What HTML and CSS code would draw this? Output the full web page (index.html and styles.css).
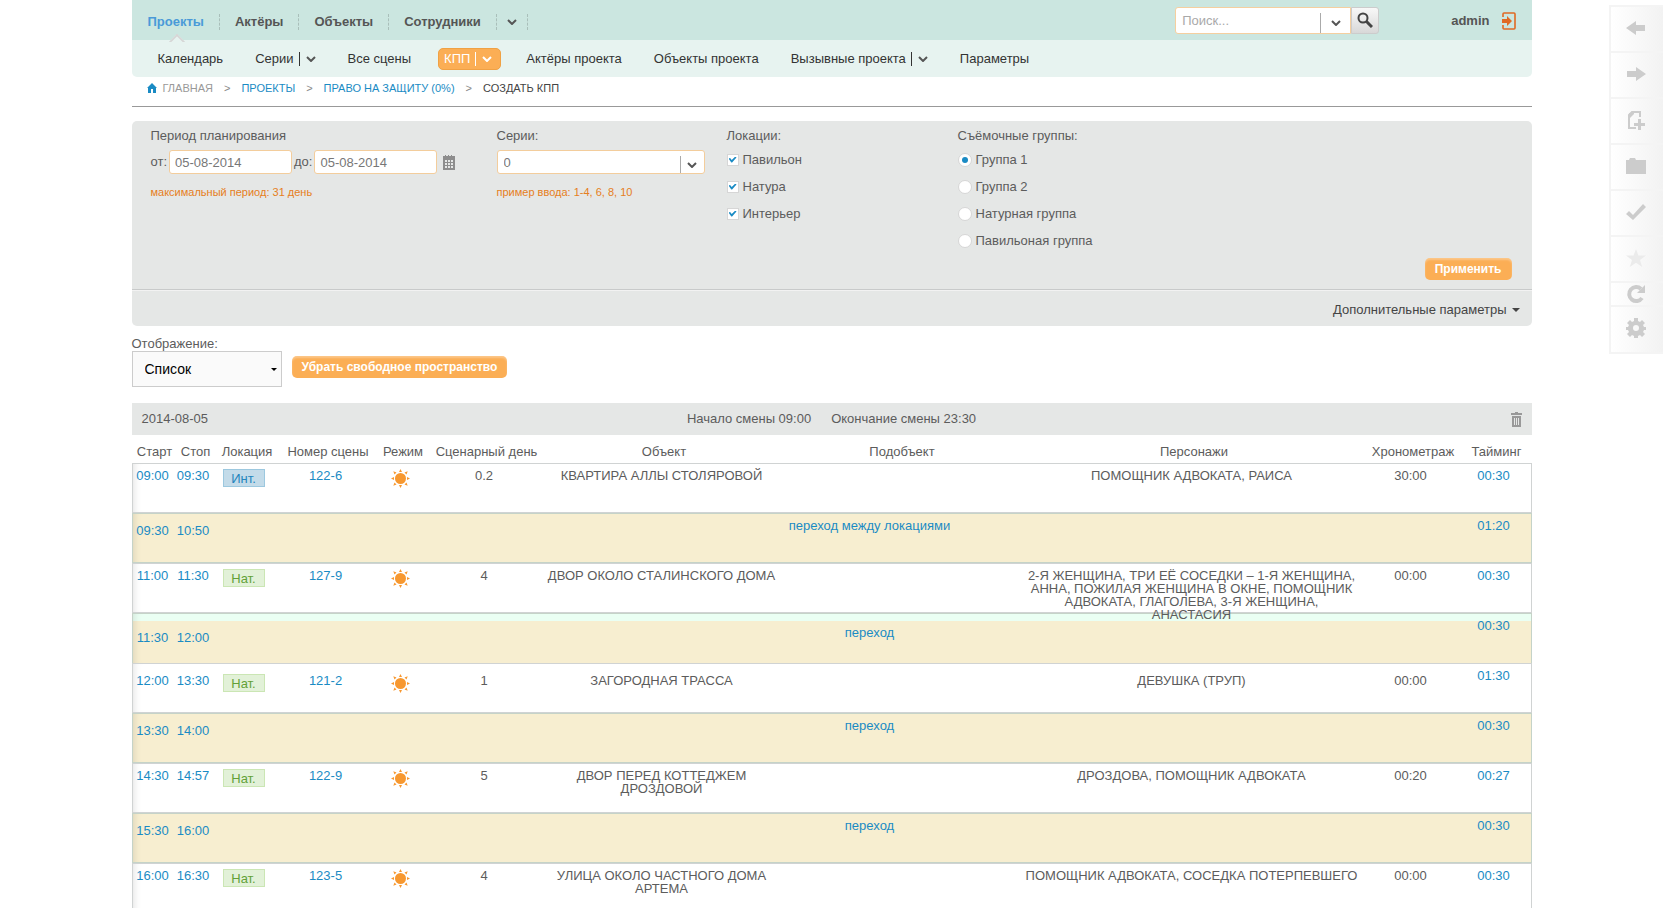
FILE: index.html
```html
<!DOCTYPE html>
<html lang="ru">
<head>
  <meta charset="UTF-8">
  <meta name="viewport" content="width=device-width, initial-scale=1.0">
  <title>Создать КПП</title>
  <link rel="stylesheet" href="styles.css">
</head>
<body>
  <!-- Shared icons -->
  <svg class="sprite" aria-hidden="true">
    <symbol id="chevron" viewBox="0 0 10 6"><path d="M1 1l4 4 4-4" fill="none" stroke="currentColor" stroke-width="2"/></symbol>
    <symbol id="sun" viewBox="0 0 19 19">
      <circle cx="9.5" cy="9.5" r="5.5"/>
      <path d="M8 3h3L9.500 0zM8 16h3l-1.500 3zM3 8v3L0 9.500zM16 8v3l3-1.500zM2.300 2.300l3.200 1.200-2 2zM16.700 2.300l-3.200 1.200 2 2zM2.300 16.700l3.200-1.200-2-2zM16.700 16.700l-3.200-1.200 2-2z"/>
    </symbol>
  </svg>

  <div class="page">
    <header class="header">
      <div class="topbar">
        <nav class="main-nav">
          <a class="active" href="#">Проекты</a>
          <a href="#">Актёры</a>
          <a href="#">Объекты</a>
          <a href="#">Сотрудники</a>
          <button class="more" type="button" aria-label="Ещё"><svg class="chevron"><use href="#chevron"/></svg></button>
        </nav>
        <form class="search">
          <div class="search-box">
            <input type="text" placeholder="Поиск..." aria-label="Поиск">
            <button class="drop" type="button" aria-label="Где искать"><svg class="chevron"><use href="#chevron"/></svg></button>
          </div>
          <button class="search-btn" type="submit" aria-label="Найти">
            <svg width="16" height="16" viewBox="0 0 16 16"><circle cx="6" cy="6" r="4.500" fill="none" stroke="#444" stroke-width="2"/><path d="M9 9l6 6" stroke="#444" stroke-width="3"/></svg>
          </button>
        </form>
        <div class="user">
          <a href="#">admin</a>
          <a class="logout" href="#" aria-label="Выход">
            <svg width="14" height="18" viewBox="0 0 14 18"><path d="M1 5V2q0-1 1-1h10q1 0 1 1v14q0 1-1 1H2q-1 0-1-1v-3" fill="none" stroke="#e06a24" stroke-width="1.600"/><path d="M0 7h5V4l5 5-5 5v-3H0z" fill="#e06a24"/></svg>
          </a>
        </div>
      </div>
      <nav class="sub-nav">
        <a href="#">Календарь</a>
        <a class="has-menu" href="#">Серии<i></i><svg class="chevron"><use href="#chevron"/></svg></a>
        <a href="#">Все сцены</a>
        <a class="has-menu current" href="#">КПП<i></i><svg class="chevron"><use href="#chevron"/></svg></a>
        <a href="#">Актёры проекта</a>
        <a href="#">Объекты проекта</a>
        <a class="has-menu" href="#">Вызывные проекта<i></i><svg class="chevron"><use href="#chevron"/></svg></a>
        <a href="#">Параметры</a>
      </nav>
    </header>

    <div class="breadcrumbs">
      <a class="home" href="#"><svg width="10" height="10" viewBox="0 0 10 10"><path d="M5 0l5 5H9v5H6V6H4v4H1V5H0z" fill="#1a8bc4"/></svg>ГЛАВНАЯ</a>
      <span>&gt;</span>
      <a href="#">ПРОЕКТЫ</a>
      <span>&gt;</span>
      <a href="#">ПРАВО НА ЗАЩИТУ (0%)</a>
      <span>&gt;</span>
      <b>СОЗДАТЬ КПП</b>
    </div>

    <form class="filter">
      <div class="filter-cols">
        <div class="filter-col">
          <div class="filter-title">Период планирования</div>
          <div class="period">
            <label for="from">от:</label>
            <input class="field" id="from" type="text" value="05-08-2014">
            <label for="to">до:</label>
            <input class="field" id="to" type="text" value="05-08-2014">
            <button class="calendar" type="button" aria-label="Календарь">
              <svg width="12" height="15" viewBox="0 0 12 15"><path d="M0 1h2V0h1v1h2V0h1v1h2V0h1v1h3v14H0z" fill="#8d8d8d"/><path d="M2 5h2v2H2zM5 5h2v2H5zM8 5h2v2H8zM2 8h2v2H2zM5 8h2v2H5zM8 8h2v2H8zM2 11h2v2H2zM5 11h2v2H5zM8 11h2v2H8z" fill="#e5e7e6"/></svg>
            </button>
          </div>
          <div class="hint">максимальный период: 31 день</div>
        </div>
        <div class="filter-col">
          <label class="filter-title" for="series">Серии:</label>
          <div class="field combo">
            <input id="series" type="text" value="0">
            <button class="drop" type="button" aria-label="Выбрать серии"><svg class="chevron"><use href="#chevron"/></svg></button>
          </div>
          <div class="hint">пример ввода: 1-4, 6, 8, 10</div>
        </div>
        <div class="filter-col">
          <div class="filter-title">Локации:</div>
          <label class="option"><input type="checkbox" checked>Павильон</label>
          <label class="option"><input type="checkbox" checked>Натура</label>
          <label class="option"><input type="checkbox" checked>Интерьер</label>
        </div>
        <div class="filter-col">
          <div class="filter-title">Съёмочные группы:</div>
          <label class="option"><input type="radio" name="group" checked>Группа 1</label>
          <label class="option"><input type="radio" name="group">Группа 2</label>
          <label class="option"><input type="radio" name="group">Натурная группа</label>
          <label class="option"><input type="radio" name="group">Павильоная группа</label>
        </div>
      </div>
      <div class="filter-submit"><button class="btn" type="submit">Применить</button></div>
      <div class="filter-more"><a href="#">Дополнительные параметры</a></div>
    </form>

    <label class="view-label" for="view">Отображение:</label>
    <div class="view">
      <div class="select">
        <select id="view">
          <option>Список</option>
        </select>
      </div>
      <button class="btn" type="button">Убрать свободное пространство</button>
    </div>

    <div class="day">
      <span class="date">2014-08-05</span>
      <span class="shift"><span>Начало смены 09:00</span><span>Окончание смены 23:30</span></span>
      <button class="trash" type="button" aria-label="Удалить">
        <svg width="11" height="15" viewBox="0 0 11 15"><path d="M0 1h4V0h3v1h4v2H0zM1 4h9v11H1z" fill="#999"/><path d="M3.500 6v7M5.500 6v7M7.500 6v7" stroke="#e5e7e6"/></svg>
      </button>
    </div>

    <table class="schedule">
      <colgroup>
        <col class="c-time"><col class="c-time"><col class="c-loc"><col class="c-num"><col class="c-mode"><col class="c-day">
        <col class="c-obj"><col class="c-obj"><col><col class="c-chrono"><col class="c-timing">
      </colgroup>
      <thead>
        <tr>
          <th>Старт</th><th>Стоп</th><th>Локация</th><th>Номер сцены</th><th>Режим</th><th>Сценарный день</th>
          <th>Объект</th><th>Подобъект</th><th>Персонажи</th><th>Хронометраж</th><th>Тайминг</th>
        </tr>
      </thead>
      <tbody>
        <tr>
          <td><a href="#">09:00</a></td><td><a href="#">09:30</a></td>
          <td><span class="tag int">Инт.</span></td>
          <td><a href="#">122-6</a></td>
          <td><svg class="sun"><use href="#sun"/></svg></td>
          <td>0.2</td>
          <td>КВАРТИРА АЛЛЫ СТОЛЯРОВОЙ</td><td></td>
          <td>ПОМОЩНИК АДВОКАТА, РАИСА</td>
          <td>30:00</td><td><a href="#">00:30</a></td>
        </tr>
        <tr class="move">
          <td><a href="#">09:30</a></td><td><a href="#">10:50</a></td>
          <td></td><td class="move-name" colspan="7"><a href="#">переход между локациями</a></td>
          <td><a href="#">01:20</a></td>
        </tr>
        <tr>
          <td><a href="#">11:00</a></td><td><a href="#">11:30</a></td>
          <td><span class="tag nat">Нат.</span></td>
          <td><a href="#">127-9</a></td>
          <td><svg class="sun"><use href="#sun"/></svg></td>
          <td>4</td>
          <td>ДВОР ОКОЛО СТАЛИНСКОГО ДОМА</td><td></td>
          <td><div class="cast">2-Я ЖЕНЩИНА, ТРИ ЕЁ СОСЕДКИ – 1-Я ЖЕНЩИНА, АННА, ПОЖИЛАЯ ЖЕНЩИНА В ОКНЕ, ПОМОЩНИК АДВОКАТА, ГЛАГОЛЕВА, 3-Я ЖЕНЩИНА, АНАСТАСИЯ</div></td>
          <td>00:00</td><td><a href="#">00:30</a></td>
        </tr>
        <tr class="move shifted">
          <td><a href="#">11:30</a></td><td><a href="#">12:00</a></td>
          <td></td><td class="move-name" colspan="7"><a href="#">переход</a></td>
          <td><a href="#">00:30</a></td>
        </tr>
        <tr class="after-shift">
          <td><a href="#">12:00</a></td><td><a href="#">13:30</a></td>
          <td><span class="tag nat">Нат.</span></td>
          <td><a href="#">121-2</a></td>
          <td><svg class="sun"><use href="#sun"/></svg></td>
          <td>1</td>
          <td>ЗАГОРОДНАЯ ТРАССА</td><td></td>
          <td>ДЕВУШКА (ТРУП)</td>
          <td>00:00</td><td><a href="#">01:30</a></td>
        </tr>
        <tr class="move">
          <td><a href="#">13:30</a></td><td><a href="#">14:00</a></td>
          <td></td><td class="move-name" colspan="7"><a href="#">переход</a></td>
          <td><a href="#">00:30</a></td>
        </tr>
        <tr>
          <td><a href="#">14:30</a></td><td><a href="#">14:57</a></td>
          <td><span class="tag nat">Нат.</span></td>
          <td><a href="#">122-9</a></td>
          <td><svg class="sun"><use href="#sun"/></svg></td>
          <td>5</td>
          <td>ДВОР ПЕРЕД КОТТЕДЖЕМ ДРОЗДОВОЙ</td><td></td>
          <td>ДРОЗДОВА, ПОМОЩНИК АДВОКАТА</td>
          <td>00:20</td><td><a href="#">00:27</a></td>
        </tr>
        <tr class="move">
          <td><a href="#">15:30</a></td><td><a href="#">16:00</a></td>
          <td></td><td class="move-name" colspan="7"><a href="#">переход</a></td>
          <td><a href="#">00:30</a></td>
        </tr>
        <tr>
          <td><a href="#">16:00</a></td><td><a href="#">16:30</a></td>
          <td><span class="tag nat">Нат.</span></td>
          <td><a href="#">123-5</a></td>
          <td><svg class="sun"><use href="#sun"/></svg></td>
          <td>4</td>
          <td>УЛИЦА ОКОЛО ЧАСТНОГО ДОМА АРТЕМА</td><td></td>
          <td>ПОМОЩНИК АДВОКАТА, СОСЕДКА ПОТЕРПЕВШЕГО</td>
          <td>00:00</td><td><a href="#">00:30</a></td>
        </tr>
      </tbody>
    </table>
  </div>

  <!-- Floating tools on the right edge -->
  <div class="tools">
    <button type="button" aria-label="Назад"><svg viewBox="0 0 20 20"><path d="M0 10l10-7v4h9v6h-9v4z"/></svg></button>
    <button type="button" aria-label="Вперёд"><svg viewBox="0 0 20 20"><path d="M20 10l-10-7v4H1v6h9v4z"/></svg></button>
    <button type="button" aria-label="Создать"><svg viewBox="0 0 20 20"><path d="M14 7V2H6L3 5v13h7" fill="none" stroke="#ccc" stroke-width="2"/><path d="M3 3h5v1L4 8H3zM12 9h3v4h4v3h-4v4h-3v-4H8v-3h4z"/></svg></button>
    <button type="button" aria-label="Папка"><svg viewBox="0 0 20 20"><path d="M0 4h3l1-2h5l1 2h10v14H0z"/></svg></button>
    <button type="button" aria-label="Готово"><svg viewBox="0 0 20 20"><path d="M0 12l3-3 4 4L17 2l3 3L7 18z"/></svg></button>
    <button class="disabled" type="button" aria-label="Избранное"><svg viewBox="0 0 20 20"><path d="M10 1l2.400 6.600H20l-6 4.300L16.200 19 10 14.800 3.800 19 6 11.900 0 7.600h7.600z"/></svg></button>
    <button class="short" type="button" aria-label="Обновить"><svg viewBox="0 0 20 20"><path d="M16 14a7 7 0 1 1-1-9" fill="none" stroke="#ccc" stroke-width="4"/><path d="M19 1v8h-8z"/></svg></button>
    <button type="button" aria-label="Настройки"><svg viewBox="0 0 20 20"><path fill-rule="evenodd" d="M8 0h4v3l2 1 2-2 3 3-2 2 1 2h2v3h-2l-1 2 2 2-3 3-2-2-2 1v2H8v-2l-2-1-2 2-3-3 2-2-1-2H0V9h2l1-2-2-2 3-3 2 2 2-1zM10 7a3 3 0 1 0 0 6 3 3 0 0 0 0-6z"/></svg></button>
  </div>
</body>
</html>
```

FILE: styles.css
```css
*, *::before, *::after {
  box-sizing: border-box;
}

body {
  margin: 0;
  font-family: "Liberation Sans", Arial, sans-serif;
  font-size: 13px;
  line-height: 16px;
  color: #5c5c5c;
  background: #fff;
  height: 100vh;
  overflow: hidden;
}

a {
  color: #1a8bc4;
  text-decoration: none;
}

button, input, select {
  font: inherit;
  color: inherit;
  margin: 0;
}

button {
  padding: 0;
  border: none;
  background: none;
  cursor: pointer;
}

svg {
  display: block;
  flex: none;
}

.sprite {
  position: absolute;
  width: 0;
  height: 0;
}

.chevron {
  width: 10px;
  height: 6px;
}

.page {
  max-width: 1400px;
  margin: 0 auto;
}

/* Header */
.header {
  background: #e7f3f0;
  border-radius: 0 0 5px 5px;
}

.topbar {
  display: flex;
  align-items: center;
  height: 40px;
  padding-right: 16px;
  background: #cbe6e0;
}

.main-nav {
  display: flex;
  align-items: center;
  height: 40px;
  padding: 3px 0 0 1px;
  font-weight: bold;
}

.main-nav a, .main-nav .more {
  display: flex;
  align-items: center;
  height: 16px;
  padding: 0 15px;
  color: #555;
  border-right: 1px dashed #a9bfba;
}

.main-nav .more {
  padding: 0 10px;
}

.main-nav .active {
  position: relative;
  color: #4a9ad8;
}

/* Pointer under the active section */
.main-nav .active::after {
  content: "";
  position: absolute;
  top: 22px;
  left: 38px;
  width: 12px;
  height: 12px;
  border: solid #d6d6d6;
  border-width: 2px 0 0 2px;
  background: #e7f3f0;
  transform: rotate(45deg);
  clip-path: polygon(0 0, 100% 0, 0 100%);
}

.search {
  display: flex;
  height: 27px;
  margin-left: auto;
}

.search-box {
  display: flex;
  width: 176px;
  background: #fff;
  border: 1px solid #f5cf9f;
  border-radius: 3px 0 0 3px;
}

.search-box input, .combo input {
  flex: 1;
  min-width: 0;
  padding: 2px 6px 0;
  border: none;
  background: none;
  outline: none;
}

::placeholder {
  color: #a9a9a9;
  opacity: 1;
}

.drop {
  display: flex;
  align-items: center;
  justify-content: center;
  width: 30px;
  margin-top: 5px;
  border-left: 1px solid #aaa;
  color: #555;
}

.search-btn {
  display: flex;
  align-items: center;
  justify-content: center;
  width: 28px;
  border: 1px solid #ccc;
  border-radius: 0 3px 3px 0;
  background: linear-gradient(#f8f8f8, #d8d8d8);
}

.user {
  display: flex;
  align-items: center;
  gap: 12px;
  margin-left: 72px;
  padding-top: 2px;
  font-weight: bold;
}

.user a {
  color: #555;
}

.sub-nav {
  display: flex;
  align-items: center;
  height: 37px;
  padding-left: 10px;
}

.sub-nav a {
  padding: 0 16px;
  color: #333;
}

.sub-nav .has-menu {
  display: flex;
  align-items: center;
}

.sub-nav i {
  width: 1px;
  height: 14px;
  margin: 0 6px 0 5px;
  background: currentColor;
}

.sub-nav .chevron {
  color: #555;
}

.sub-nav .current {
  height: 22px;
  padding: 0 8px 0 5px;
  margin: 0 9px 0 11px;
  color: #fff;
  background: #fbae55;
  border: 1px solid #f0a144;
  border-radius: 5px;
}

.sub-nav .current .chevron {
  color: #fff;
}

.breadcrumbs {
  display: flex;
  gap: 11px;
  height: 30px;
  padding: 3px 15px 0;
  border-bottom: 1px solid #999;
  font-size: 11px;
  color: #888;
}

.breadcrumbs .home {
  display: flex;
  align-items: center;
  gap: 6px;
  height: 16px;
  color: #999;
}

.breadcrumbs b {
  font-weight: normal;
  color: #444;
}

/* Filter */
.filter {
  margin-top: 14px;
  background: #e5e7e6;
  border-radius: 5px;
}

.filter-cols {
  display: grid;
  grid-template-columns: 346px 230px 231px 1fr;
  padding: 7px 19px 0;
}

.filter-title {
  display: block;
  height: 22px;
}

.period {
  display: flex;
  align-items: center;
  gap: 2px;
}

.field {
  width: 123px;
  height: 24px;
  padding: 1px 5px 0;
  border: 1px solid #f3cd9c;
  border-radius: 3px;
  background: #fff;
  color: #777;
  outline: none;
}

.calendar {
  margin-left: 4px;
}

.combo {
  display: flex;
  width: 208px;
  padding: 0;
}

.combo .drop {
  width: 24px;
}

.hint {
  margin-top: 10px;
  font-size: 11px;
  color: #e67e22;
}

.option {
  display: flex;
  align-items: center;
  gap: 4px;
  height: 27px;
}

.filter-title + .option {
  margin-top: -4px;
}

.option input {
  appearance: none;
  width: 12px;
  height: 12px;
  border: 1px solid #d6d6d6;
  background: #fff;
  display: grid;
  place-items: center;
}

.option input[type="radio"] {
  width: 14px;
  height: 14px;
  border-radius: 50%;
}

.option input[type="checkbox"]:checked::after {
  content: "";
  width: 8px;
  height: 6px;
  background: #1a8bc4;
  clip-path: polygon(0 35%, 20% 25%, 40% 60%, 85% 0, 100% 15%, 45% 100%, 35% 100%);
}

.option input[type="radio"]:checked::after {
  content: "";
  width: 6px;
  height: 6px;
  border-radius: 50%;
  background: #1a8bc4;
}

.btn {
  height: 22px;
  padding: 0 10px;
  border-radius: 5px;
  background: #fbae55;
  box-shadow: inset 0 2px 2px rgba(255, 255, 255, 0.3);
  color: #fff;
  font-size: 12px;
  font-weight: bold;
}

.filter-submit {
  display: flex;
  justify-content: flex-end;
  padding: 4px 20px 9px;
  border-bottom: 1px solid #c8caca;
}

.filter-more {
  display: flex;
  justify-content: flex-end;
  height: 36px;
  padding: 11px 12px 0;
  border-top: 1px solid #f2f2f2;
}

.filter-more a {
  display: flex;
  align-items: center;
  gap: 5px;
  height: 16px;
  color: #444;
}

.filter-more a::after {
  content: "";
  border: 4px solid transparent;
  border-top-color: #444;
  border-bottom: none;
}

/* View switch */
.view-label {
  display: block;
  margin-top: 10px;
  height: 15px;
}

.view {
  display: flex;
  gap: 10px;
}

.view .btn {
  margin-top: 5px;
}

.select {
  position: relative;
  width: 150px;
}

.select select {
  appearance: none;
  width: 100%;
  height: 36px;
  padding: 0 12px;
  border: 1px solid #ccc;
  border-radius: 0;
  background: #fafafa;
  color: #000;
  font-size: 14px;
}

.select::after {
  content: "";
  position: absolute;
  right: 5px;
  top: 17px;
  border: 3px solid transparent;
  border-top-color: #000;
  border-bottom: none;
}

/* Shooting day */
.day {
  display: grid;
  grid-template-columns: 1fr auto 1fr;
  align-items: center;
  height: 32px;
  margin-top: 16px;
  padding: 0 10px;
  background: #e5e7e6;
}

.shift {
  display: flex;
  gap: 20px;
}

.trash {
  justify-self: end;
}

.schedule {
  width: 100%;
  table-layout: fixed;
  border-collapse: separate;
  border-spacing: 0;
  line-height: 13px;
  text-align: center;
}

.c-time {
  width: 41px;
}

.c-loc {
  width: 62px;
}

.c-num {
  width: 100px;
}

.c-mode {
  width: 50px;
}

.c-day {
  width: 117px;
}

.c-obj {
  width: 17%;
}

.c-chrono {
  width: 92px;
}

.c-timing {
  width: 75px;
}

.schedule th {
  height: 28px;
  padding: 5px 0 0 5px;
  font-weight: normal;
  white-space: nowrap;
}

.schedule td {
  height: 50px;
  padding: 5px 5px 0;
  border: solid #d0d3d3;
  border-width: 1px 0;
  vertical-align: top;
}

.schedule td:first-child {
  border-left-width: 1px;
  box-shadow: inset 8px 0 8px -8px rgba(0, 0, 0, 0.15);
}

.schedule td:last-child {
  border-right-width: 1px;
}

.schedule .move td {
  border-color: #c5d3c8;
}

.schedule td:nth-child(-n+2) {
  padding-left: 0;
  padding-right: 0;
}

.move {
  background: #f7eed0;
}

.move td:nth-child(-n+2) {
  padding-top: 10px;
}

.schedule .move-name {
  padding-left: 12px;
}

.shifted {
  background: linear-gradient(#eafff3 8px, #f7eed0 8px);
}

.schedule .shifted td {
  border-bottom: none;
}

.schedule .shifted td:nth-child(-n+2) {
  padding-top: 17px;
}

.schedule .shifted .move-name {
  padding-top: 12px;
}

.after-shift td:not(:last-child) {
  padding-top: 10px;
}

/* Long lists run over the row below */
.cast {
  height: 36px;
}

.tag {
  display: block;
  width: 42px;
  height: 18px;
  margin-left: 4px;
  border: 1px solid;
  line-height: 18px;
}

.tag.int {
  color: #2585bd;
  background: #c3dbe9;
  border-color: #9cc8df;
}

.tag.nat {
  color: #62a138;
  background: #e2f1d8;
  border-color: #cbe6b4;
}

.sun {
  width: 19px;
  height: 19px;
  margin: 0 auto;
  fill: #f79830;
}

/* Right toolbar */
.tools {
  position: fixed;
  top: 5px;
  right: 0;
  width: 54px;
}

.tools button {
  display: flex;
  align-items: center;
  justify-content: center;
  width: 100%;
  height: 46px;
  padding: 0 3px 3px 0;
  border: solid #f4f4f4;
  border-width: 2px 0 0 2px;
  background: linear-gradient(90deg, #fff, #f2f2f2);
}

.tools button:last-child {
  height: 49px;
  border-bottom-width: 2px;
}

.tools .short {
  height: 24px;
  padding-bottom: 0;
}

.tools svg {
  width: 20px;
  height: 20px;
  fill: #ccc;
}

.tools .disabled svg {
  fill: #ebebeb;
}
```
